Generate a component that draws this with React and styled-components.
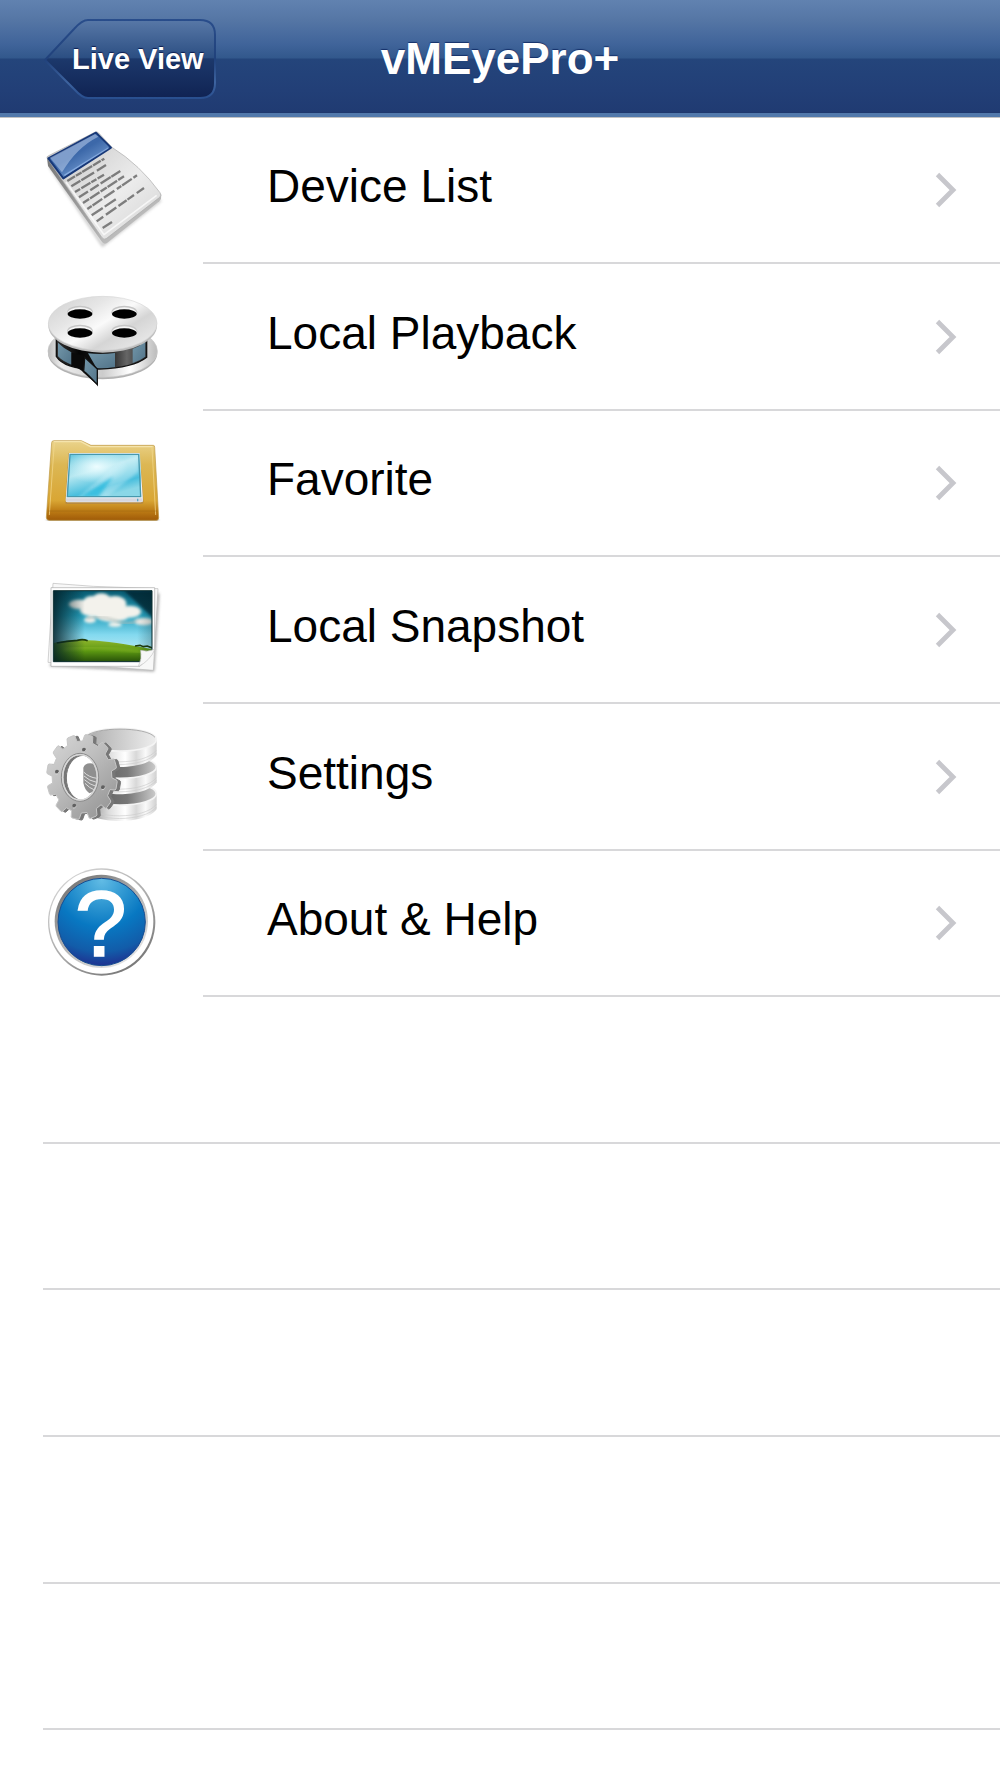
import React from "react";
import styled, { createGlobalStyle } from "styled-components";

const GlobalStyle = createGlobalStyle`
  *, *::before, *::after { box-sizing: border-box; }
  body {
    margin: 0;
    background: #fff;
    color: #000;
    font-family: "Liberation Sans", Arial, Helvetica, sans-serif;
  }
`;

const Screen = styled.div`
  min-height: 100vh;
  overflow-x: hidden;
  background: #fff;
`;

const NavBar = styled.header`
  display: grid;
  grid-template-columns: 1fr auto 1fr;
  align-items: center;
  height: 117px;
  padding: 5px 44px 0;
  border-bottom: 4px solid #5279ab;
  background: linear-gradient(
    #6182b0 0,
    #5576a5 20px,
    #40649a 44px,
    #32588c 58px,
    #24457b 59px,
    #223f77 90px,
    #203b72 112px,
    #1d3568 113px
  );
  background-origin: border-box;
`;

const BackButton = styled.button`
  display: grid;
  justify-self: start;
  width: 172px;
  height: 80px;
  padding: 0;
  border: 0;
  background: none;
  color: #fff;
  font: bold 29px/32px "Liberation Sans", Arial, Helvetica, sans-serif;
  text-shadow: 0 -1px 1px #0b1c50;
  cursor: pointer;
`;

const BackShape = styled.svg`
  grid-area: 1 / 1;
  display: block;
`;

const BackText = styled.span`
  grid-area: 1 / 1;
  align-self: center;
  padding-left: 28px;
  text-align: left;
  white-space: nowrap;
  z-index: 1;
`;

const Title = styled.h1`
  margin: 0;
  color: #fff;
  font-size: 44px;
  line-height: 52px;
  text-shadow: 0 -1px 1px #15306a;
`;

const List = styled.ul`
  display: grid;
  grid-auto-rows: 146px 147px 146px 147px 147px;
  margin: 0;
  padding: 0;
  border-top: 1px solid #c2c2c2;
  list-style: none;
`;

const Item = styled.li`
  display: grid;
`;

const EmptyItem = styled.li`
  margin-left: 43px;
  border-bottom: 2px solid #d8d8da;
`;

const RowLink = styled.a`
  display: grid;
  grid-template-columns: 203px 1fr;
  color: inherit;
  text-decoration: none;
`;

const Art = styled.svg`
  display: block;
  width: 150px;
  height: 146px;
  margin-left: 30px;
`;

const RowBody = styled.span`
  display: flex;
  align-items: center;
  justify-content: space-between;
  padding: 0 43px 0 64px;
  border-bottom: 2px solid #d8d8da;
`;

const RowLabel = styled.span`
  padding-bottom: 8px;
  font-size: 46px;
  line-height: 52px;
  white-space: nowrap;
`;

const Chevron = () => (
  <svg width="22" height="36" viewBox="0 0 22 36" aria-hidden="true">
    <path d="M2.5 2.5 18 18 2.5 33.5" fill="none" stroke="#c7c7cc" strokeWidth="4.8" />
  </svg>
);

const DeviceListArt = () => (
  <Art viewBox="0 -6 450 438" aria-hidden="true">
    <defs>
      <linearGradient id="docPage" x1="0" y1="0" x2="1" y2="1">
        <stop offset="0.2" stopColor="#cfcfcf" />
        <stop offset="0.6" stopColor="#ececec" />
        <stop offset="1" stopColor="#d2d2d2" />
      </linearGradient>
      <linearGradient id="docSide" x1="0" y1="0" x2="1" y2="1">
        <stop offset="0" stopColor="#777" />
        <stop offset="0.6" stopColor="#aaa" />
        <stop offset="1" stopColor="#d8d8d8" />
      </linearGradient>
      <linearGradient id="docHead" x1="0" y1="0" x2="0.8" y2="1">
        <stop offset="0" stopColor="#3f66ab" />
        <stop offset="0.5" stopColor="#3c68a9" />
        <stop offset="1" stopColor="#8ab0e2" />
      </linearGradient>
      <filter id="docBlur"><feGaussianBlur stdDeviation="4" /></filter>
    </defs>
    <path d="M60 140 218 376 392 240" fill="none" stroke="#777" strokeWidth="8" opacity="0.4" filter="url(#docBlur)" />
    <path d="M51 114 54 138 216 366Q223 375 231 369L388 244Q395 237 394 224L370 200Z" fill="url(#docSide)" />
    <path d="M51 114Q49 110 56 107L196 36Q201 34 206 39L246 82Q330 135 390 218 396 226 389 232L230 355Q222 361 216 353Z" fill="url(#docPage)" stroke="#aaa" strokeWidth="2" />
    <path d="M108 186 222 344 380 226" fill="none" stroke="#fff" strokeWidth="5" opacity="0.7" />
    <path d="M55 115 198 38 243 83 100 175Z" fill="url(#docHead)" stroke="#173878" strokeWidth="6" strokeLinejoin="round" />
    <path d="M60 113 195 42 205 50Q140 82 96 157Z" fill="#c8daf2" opacity="0.48" />
    <path d="M103 166 235 84" stroke="#98bced" strokeWidth="4" opacity="0.7" />
    <g stroke="#555" strokeWidth="7" opacity="0.72">
      <path d="M112 183 223 116" strokeDasharray="27 3 20 2 35 3" />
      <path d="M124 199 230 134" strokeDasharray="32 3 45 10" />
      <path d="M135 216 222 164" strokeDasharray="18 4 32 3" />
      <path d="M147 232 277 149" strokeDasharray="32 8 30 7 36 2" />
      <path d="M159 249 282 169" strokeDasharray="22 3 34 4" />
      <path d="M172 267 321 166" strokeDasharray="16 3 35 6 38 9" />
      <path d="M185 286 263 234" strokeDasharray="40 7" />
      <path d="M200 304 342 204" strokeDasharray="24 10 38 8 30 3" />
      <path d="M218 324 246 306" />
    </g>
  </Art>
);

const PlaybackArt = () => (
  <Art viewBox="0 -48 450 438" aria-hidden="true">
    <defs>
      <linearGradient id="reelTop" x1="0" y1="0.1" x2="1" y2="0.9">
        <stop offset="0" stopColor="#d2d2d2" />
        <stop offset="0.3" stopColor="#e6e6e6" />
        <stop offset="0.5" stopColor="#fafafa" />
        <stop offset="0.68" stopColor="#d5d5d5" />
        <stop offset="1" stopColor="#eee" />
      </linearGradient>
      <linearGradient id="reelBase" x1="0" x2="1">
        <stop offset="0" stopColor="#bbb" />
        <stop offset="0.12" stopColor="#eee" />
        <stop offset="0.5" stopColor="#ccc" />
        <stop offset="0.75" stopColor="#fff" />
        <stop offset="1" stopColor="#bbb" />
      </linearGradient>
      <linearGradient id="reelBand" x1="0" x2="1">
        <stop offset="0" stopColor="#333" />
        <stop offset="0.25" stopColor="#050505" />
        <stop offset="0.6" stopColor="#222" />
        <stop offset="0.78" stopColor="#666" />
        <stop offset="1" stopColor="#222" />
      </linearGradient>
      <linearGradient id="reelFrame" x1="0" y1="0" x2="1" y2="1">
        <stop offset="0" stopColor="#7397aa" />
        <stop offset="1" stopColor="#527489" />
      </linearGradient>
    </defs>
    <ellipse cx="218" cy="219" rx="164" ry="79" fill="#b1b1b1" />
    <ellipse cx="218" cy="213" rx="164" ry="79" fill="url(#reelBase)" stroke="#c9c9c9" strokeWidth="2" />
    <path d="M79 168V229Q105 270 208 267 310 264 350 232V168Z" fill="url(#reelBand)" stroke="#111" strokeWidth="4" />
    <path d="M84 188Q103 207 124 217V254Q98 244 84 229Z" fill="url(#reelFrame)" />
    <path d="M174 220Q214 225 255 219V261Q215 267 199 263Z" fill="url(#reelFrame)" />
    <path d="M308 207Q329 200 346 184V230Q330 242 308 249Z" fill="url(#reelFrame)" />
    <path d="M125 218Q143 224 158 224L202 266V315L161 278Q151 266 125 257Z" fill="#0a0a0a" />
    <path d="M164 232 202 267V314Q171 280 161 274Z" fill="url(#reelFrame)" stroke="#111" strokeWidth="4" />
    <ellipse cx="218" cy="137" rx="163" ry="81" fill="#bebebe" />
    <ellipse cx="218" cy="130" rx="163" ry="81" fill="url(#reelTop)" stroke="#d7d7d7" strokeWidth="2" />
    {[[150, 102], [283, 102], [150, 159], [283, 159]].map(([x, y]) => (
      <g key={`${x}-${y}`}>
        <ellipse cx={x} cy={y - 5} rx="39" ry="20" fill="#c5c5c5" />
        <ellipse cx={x} cy={y - 2} rx="37" ry="18" fill="#f5f5f5" />
        <ellipse cx={x} cy={y} rx="37" ry="14" fill="#000" />
      </g>
    ))}
  </Art>
);

const FavoriteArt = () => (
  <Art viewBox="0 -42 450 438" aria-hidden="true">
    <defs>
      <linearGradient id="folder" x1="0" y1="0" x2="0" y2="1">
        <stop offset="0" stopColor="#ead38b" />
        <stop offset="0.3" stopColor="#dcb754" />
        <stop offset="0.75" stopColor="#d9a634" />
        <stop offset="0.88" stopColor="#bd7c15" />
        <stop offset="1" stopColor="#9f5a08" />
      </linearGradient>
      <linearGradient id="folderScreen" x1="0" y1="0" x2="0.5" y2="1">
        <stop offset="0" stopColor="#61c5dd" />
        <stop offset="0.45" stopColor="#b7e8f1" />
        <stop offset="0.82" stopColor="#48bedd" />
        <stop offset="1" stopColor="#8ad7e7" />
      </linearGradient>
      <radialGradient id="folderGlow">
        <stop offset="0" stopColor="#edfdff" />
        <stop offset="1" stopColor="#dcf8fc" stopOpacity="0" />
      </radialGradient>
      <clipPath id="folderClip"><path d="M120 88H330L334 215H110Z" /></clipPath>
      <filter id="folderBlur"><feGaussianBlur stdDeviation="5" /></filter>
    </defs>
    <path d="M52 284 218 285 384 284" fill="none" stroke="#555" strokeWidth="12" opacity="0.5" filter="url(#folderBlur)" />
    <path d="M65 53Q65 47 72 47H154L183 61H370Q374 61 374 67L386 278Q386 286 378 286H58Q49 286 49 277Z" fill="url(#folder)" stroke="#bd963f" strokeWidth="2" />
    <path d="M73 54 58 270M366 68 377 270" stroke="#f4d98e" strokeWidth="3" opacity="0.7" />
    <path d="M71 50H153L181 65H368" fill="none" stroke="#f5e4ac" strokeWidth="4" />
    <path d="M53 258H383" stroke="#8d5b11" strokeWidth="2" opacity="0.5" />
    <path d="M115 84H329L341 230Q341 237 334 237H112Q105 237 106 230Z" fill="#a9824d" opacity="0.6" />
    <path d="M117 84H329L339 226Q339 232 333 232H112Q106 232 107 226Z" fill="#edf3f7" />
    <path d="M108 220H338V230H108Z" fill="#d6d7df" />
    <g clipPath="url(#folderClip)">
      <path d="M110 86H336V216H110Z" fill="url(#folderScreen)" />
      <ellipse cx="200" cy="125" rx="95" ry="50" fill="url(#folderGlow)" />
      <path d="M145 216 270 112 325 90V140L230 216Z" fill="#e1f8fd" opacity="0.35" filter="url(#folderBlur)" />
      <path d="M150 216 250 155 205 216Z" fill="#1eb6dc" opacity="0.7" filter="url(#folderBlur)" />
    </g>
    <path d="M120 88H326L332 215H112Z" fill="none" stroke="#4798ad" strokeWidth="4" />
    <path d="M323 221V229" stroke="#55a9ca" strokeWidth="4" />
  </Art>
);

const SnapshotArt = () => (
  <Art viewBox="0 -39 450 438" aria-hidden="true">
    <defs>
      <linearGradient id="photoSky" x1="0" y1="0" x2="0" y2="1">
        <stop offset="0" stopColor="#075a70" />
        <stop offset="0.35" stopColor="#25a0bd" />
        <stop offset="0.62" stopColor="#83d9ef" />
        <stop offset="1" stopColor="#d5f2f4" />
      </linearGradient>
      <linearGradient id="photoGrass" x1="0" y1="0" x2="0" y2="1">
        <stop offset="0" stopColor="#8db52b" />
        <stop offset="0.5" stopColor="#5c9812" />
        <stop offset="1" stopColor="#244d08" />
      </linearGradient>
      <linearGradient id="photoShade" x1="0" x2="1">
        <stop offset="0" stopColor="#021f26" stopOpacity="0.85" />
        <stop offset="0.32" stopColor="#021f26" stopOpacity="0" />
        <stop offset="0.85" stopColor="#021f26" stopOpacity="0" />
        <stop offset="1" stopColor="#021f26" stopOpacity="0.25" />
      </linearGradient>
      <filter id="photoSoft"><feGaussianBlur stdDeviation="4" /></filter>
      <clipPath id="photoClip"><path d="M70 62H366V240L330 275H70Z" /></clipPath>
    </defs>
    <path d="M60 285 369 300 384 70" fill="none" stroke="#444" strokeWidth="8" opacity="0.5" filter="url(#photoSoft)" />
    <path d="M69 40 190 49 384 56 370 301 54 277Z" fill="#f8f8f8" stroke="#bbb" strokeWidth="2" />
    <path d="M63 53H374V240L330 289H63Z" fill="#fff" stroke="#aaa" strokeWidth="2" />
    <g clipPath="url(#photoClip)">
      <path d="M70 62H366V275H70Z" fill="url(#photoSky)" />
      <path d="M280 60H370V145Z" fill="#06232e" opacity="0.8" filter="url(#photoSoft)" />
      <g fill="#f3f2ec" filter="url(#photoSoft)">
        <ellipse cx="148" cy="103" rx="32" ry="14" />
        <ellipse cx="184" cy="95" rx="24" ry="17" />
        <ellipse cx="214" cy="91" rx="30" ry="21" />
        <ellipse cx="255" cy="102" rx="34" ry="24" />
        <ellipse cx="300" cy="125" rx="34" ry="18" />
        <ellipse cx="200" cy="121" rx="50" ry="20" />
        <ellipse cx="248" cy="137" rx="50" ry="18" />
        <ellipse cx="180" cy="150" rx="18" ry="9" />
        <ellipse cx="255" cy="164" rx="20" ry="7" />
        <ellipse cx="342" cy="155" rx="28" ry="11" />
      </g>
      <path d="M170 145Q210 134 253 151T325 151" fill="none" stroke="#b1bbb6" strokeWidth="7" opacity="0.7" filter="url(#photoSoft)" />
      <path d="M70 219Q147 205 175 211 250 214 366 238V277H70Z" fill="url(#photoGrass)" />
      <path d="M80 219Q110 213 142 211 158 206 173 212M315 228 330 226 340 230 352 228 366 234" fill="none" stroke="#203d0b" strokeWidth="5" />
      <path d="M100 238Q192 225 340 247" fill="none" stroke="#a2c735" strokeWidth="7" opacity="0.4" filter="url(#photoSoft)" />
      <path d="M70 62H366V277H70Z" fill="url(#photoShade)" />
    </g>
    <path d="M70 62H366V240L330 275H70Z" fill="none" stroke="#082a2d" strokeWidth="3" />
    <path d="M332 241Q352 247 375 238 360 272 325 290 337 266 332 241Z" fill="#f7f7f7" stroke="#c4c4c4" strokeWidth="2" />
  </Art>
);

const gearOutline = (cx, cy, outer, inner, teeth) => {
  const points = [];
  const step = (Math.PI * 2) / teeth;
  for (let i = 0; i < teeth; i += 1) {
    const middle = -Math.PI / 2 + 0.2 + i * step;
    [[-0.34, inner], [-0.23, outer - 2], [-0.17, outer], [0.16, outer], [0.22, outer - 2], [0.3, inner]].forEach(([offset, radius]) => {
      const angle = middle + offset * step;
      points.push(`${cx + Math.cos(angle) * radius * 0.83},${cy + Math.sin(angle) * radius}`);
    });
  }
  return `M${points.join("L")}Z`;
};

const GEAR_RING = `${gearOutline(156, 186, 128, 108, 12)}M99 187A51 68 0 1 0 201 187A51 68 0 1 0 99 187Z`;

const SettingsArt = () => (
  <Art viewBox="0 -33 450 438" aria-hidden="true">
    <defs>
      <linearGradient id="diskSide" x1="0" x2="1">
        <stop offset="0" stopColor="#777" />
        <stop offset="0.35" stopColor="#ddd" />
        <stop offset="0.57" stopColor="#fff" />
        <stop offset="0.72" stopColor="#d8d8d8" />
        <stop offset="0.85" stopColor="#fafafa" />
        <stop offset="1" stopColor="#d0d0d0" />
      </linearGradient>
      <linearGradient id="diskTop" x1="0" x2="1">
        <stop offset="0" stopColor="#aaa" />
        <stop offset="1" stopColor="#eee" />
      </linearGradient>
      <linearGradient id="diskDark" x1="0" x2="1">
        <stop offset="0" stopColor="#555" />
        <stop offset="0.6" stopColor="#777" />
        <stop offset="1" stopColor="#ccc" />
      </linearGradient>
      <linearGradient id="gearFace" x1="0" y1="0" x2="0.8" y2="1">
        <stop offset="0" stopColor="#d8d8d8" />
        <stop offset="0.45" stopColor="#bfbfbf" />
        <stop offset="1" stopColor="#969696" />
      </linearGradient>
    </defs>
    {[236, 156, 74].map((y) => (
      <g key={y}>
        <path d={`M160 ${y}V${y + 46}C185 ${y + 94} 350 ${y + 94} 380 ${y + 46}V${y}Z`} fill="url(#diskSide)" />
        <path d={`M162 ${y + 32}C190 ${y + 78} 345 ${y + 78} 379 ${y + 32}`} fill="none" stroke="#ccc" strokeWidth="2" />
        <path d={`M162 ${y + 40}C190 ${y + 86} 345 ${y + 86} 379 ${y + 40}`} fill="none" stroke="#ccc" strokeWidth="2" />
        <ellipse cx="270" cy={y} rx="109" ry="34" fill={y === 74 ? "url(#diskTop)" : "url(#diskDark)"} stroke="#f4f4f4" strokeWidth="5" />
        {y === 74 && <path d="M165 67C190 34 350 34 375 67" fill="none" stroke="#888" strokeWidth="2" />}
      </g>
    ))}
    <path d="M150 119A51 68 0 0 1 150 255A51 68 0 0 1 150 119Z" fill="#fff" />
    <path d="M193 146Q165 140 160 158V204Q164 225 178 235L201 226V160Z" fill="#8f8f8f" />
    <path d="M161 171Q176 187 201 190M162 183Q178 198 200 202M163 194Q180 209 198 214M165 205Q179 220 194 225" fill="none" stroke="#ddd" strokeWidth="3" />
    <path d={GEAR_RING} fill="#777" fillRule="evenodd" stroke="#777" strokeWidth="3" strokeLinejoin="round" transform="translate(10 2)" />
    <path d={GEAR_RING} fill="url(#gearFace)" fillRule="evenodd" stroke="#c7c7c7" strokeWidth="3" strokeLinejoin="round" />
    <ellipse cx="150" cy="187" rx="56" ry="72" fill="none" stroke="#8c8c8c" strokeWidth="3" />
    <ellipse cx="150" cy="187" rx="52" ry="68" fill="none" stroke="#d8d8d8" strokeWidth="4" />
    {[[162, 104], [81, 170], [219, 217], [133, 272]].map(([x, y]) => (
      <g key={`${x}-${y}`}>
        <ellipse cx={x} cy={y} rx="6" ry="6" fill="#606060" />
        <path d={`M${x - 4} ${y + 7}Q${x + 4} ${y + 9} ${x + 6} ${y}`} fill="none" stroke="#e8e8e8" strokeWidth="2" />
      </g>
    ))}
  </Art>
);

const HelpArt = () => (
  <Art viewBox="0 -12 450 438" aria-hidden="true">
    <defs>
      <linearGradient id="helpRim" x1="0" y1="0" x2="0.7" y2="1">
        <stop offset="0" stopColor="#ddd" />
        <stop offset="0.6" stopColor="#aaa" />
        <stop offset="1" stopColor="#777" />
      </linearGradient>
      <linearGradient id="helpInset" x1="0" y1="0" x2="0.7" y2="1">
        <stop offset="0" stopColor="#666" />
        <stop offset="0.5" stopColor="#aaa" />
        <stop offset="1" stopColor="#e5e5e5" />
      </linearGradient>
      <radialGradient id="helpBlue" cx="0.5" cy="0.02" r="1">
        <stop offset="0" stopColor="#62bce5" />
        <stop offset="0.28" stopColor="#3098d2" />
        <stop offset="0.54" stopColor="#0878c2" />
        <stop offset="0.82" stopColor="#125ca9" />
        <stop offset="1" stopColor="#202d8e" />
      </radialGradient>
    </defs>
    <circle cx="215" cy="201" r="161" fill="url(#helpRim)" />
    <circle cx="214" cy="200" r="156" fill="#fff" />
    <circle cx="214" cy="199" r="140" fill="url(#helpInset)" />
    <circle cx="215" cy="201" r="131" fill="url(#helpBlue)" stroke="#174d91" strokeWidth="3" />
    <text x="212" y="304" textAnchor="middle" fill="#fff" stroke="#fff" strokeWidth="5" fontFamily="Liberation Sans, Arial, sans-serif" fontSize="280">?</text>
  </Art>
);

const MENU = [
  { label: "Device List", href: "#device-list", Icon: DeviceListArt },
  { label: "Local Playback", href: "#local-playback", Icon: PlaybackArt },
  { label: "Favorite", href: "#favorite", Icon: FavoriteArt },
  { label: "Local Snapshot", href: "#local-snapshot", Icon: SnapshotArt },
  { label: "Settings", href: "#settings", Icon: SettingsArt },
  { label: "About & Help", href: "#about", Icon: HelpArt },
];

const EMPTY_ROWS = [0, 1, 2, 3, 4];

export default function App() {
  return (
    <Screen>
      <GlobalStyle />
      <NavBar>
        <BackButton type="button">
          <BackShape width="172" height="80" viewBox="0 0 172 80" aria-hidden="true">
            <defs>
              <linearGradient id="backFill" x1="0" y1="0" x2="0" y2="1">
                <stop offset="0" stopColor="#5878a7" />
                <stop offset="0.48" stopColor="#2c4f83" />
                <stop offset="0.5" stopColor="#1c386b" />
                <stop offset="1" stopColor="#102353" />
              </linearGradient>
              <linearGradient id="backEdge" x1="0" y1="0" x2="0" y2="1">
                <stop offset="0" stopColor="#294d8b" />
                <stop offset="0.5" stopColor="#20417b" />
                <stop offset="0.8" stopColor="#3d639f" />
                <stop offset="1" stopColor="#294f8f" />
              </linearGradient>
            </defs>
            <path d="M1 41 30 10Q38 1 44 1H156Q171 1 171 16V64Q171 79 156 79H44Q38 79 30 70Z" fill="url(#backFill)" stroke="url(#backEdge)" strokeWidth="2" />
          </BackShape>
          <BackText>Live View</BackText>
        </BackButton>
        <Title>vMEyePro+</Title>
      </NavBar>
      <main>
        <List>
          {MENU.map(({ label, href, Icon }) => (
            <Item key={label}>
              <RowLink href={href}>
                <Icon />
                <RowBody>
                  <RowLabel>{label}</RowLabel>
                  <Chevron />
                </RowBody>
              </RowLink>
            </Item>
          ))}
          {EMPTY_ROWS.map((row) => (
            <EmptyItem key={row} aria-hidden="true" />
          ))}
        </List>
      </main>
    </Screen>
  );
}
